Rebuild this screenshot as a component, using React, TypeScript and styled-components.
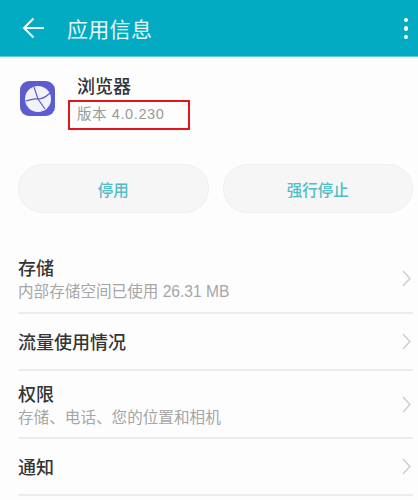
import React from "react";
import styled, { createGlobalStyle } from "styled-components";

const Global = createGlobalStyle`
  html, body { margin: 0; padding: 0; background: #fdfdfd; }
  body { font-family: "Liberation Sans", "Noto Sans CJK SC", sans-serif; }
`;
const Page = styled.div`
  width: 418px; height: 500px; overflow: hidden; background: #fdfdfd;
  display: flex; flex-direction: column;
`;
const Bar = styled.header`
  height: 57px; flex: none; background: #02abc1; border-bottom: 1px solid #5fcbd8; box-sizing: border-box;
  display: flex; align-items: center; padding: 0 10px 0 22px; color: #f2fbfc;
`;
const Title = styled.h1`
  margin: 0 0 0 23px; font-size: 21px; font-weight: 400; letter-spacing: 0.3px; flex: 1; color: #e6f7f9;
`;
const Dots = styled.div`
  display: flex; flex-direction: column; gap: 4px; margin-top: 1px;
  i { width: 4.5px; height: 4.5px; border-radius: 50%; background: #fff; display: block; }
`;
const AppRow = styled.section`
  display: flex; padding: 20px 0 0 20px; height: 107px; box-sizing: border-box; flex: none;
`;
const AppIcon = styled.div`
  width: 35px; height: 35px; border-radius: 9px; background: #5d5bd0; margin-top: 4px;
  display: flex; align-items: center; justify-content: center;
`;
const AppText = styled.div`
  margin-left: 22px; position: relative;
`;
const AppName = styled.div`
  font-size: 18px; line-height: 20px; color: #333; font-weight: 500;
`;
const Version = styled.div`
  font-size: 14.5px; line-height: 18px; color: #9a9a9a; margin-top: 8px; letter-spacing: 0.6px; white-space: nowrap;
`;
const Highlight = styled.div`
  position: absolute; left: -9px; top: 23px; width: 122px; height: 30px;
  border: 2px solid #e8141c; box-sizing: border-box;
`;
const Buttons = styled.div`
  display: flex; gap: 14px; padding: 0 5px 0 18px; flex: none;
`;
const Pill = styled.button`
  flex: 1; height: 49px; border-radius: 25px; background: #f6f6f6; border: 1px solid #efefef;
  color: #4fbcc6; font: 500 15.5px "Liberation Sans", "Noto Sans CJK SC", sans-serif; padding: 0;
`;
const List = styled.ul`
  list-style: none; margin: 31px 0 0; padding: 0 5px 0 18px;
`;
const Row = styled.li<{ $h: number }>`
  height: ${p => p.$h}px; display: flex; align-items: center; justify-content: space-between;
  border-bottom: 2px solid #ececec; box-sizing: border-box; padding-right: 2px;
`;
const RowText = styled.div`
  padding-top: 4px;
`;
const Label = styled.div`
  font-size: 18px; line-height: 23px; color: #353535; font-weight: 500;
`;
const Sub = styled.div`
  font-size: 15.6px; line-height: 21px; color: #a6a6a6; white-space: nowrap;
`;

const Chevron = () => (
  <svg width="9" height="17" viewBox="0 0 9 17" fill="none" stroke="#cfcfcf" strokeWidth="1.6">
    <path d="M1 1l7 7.5-7 7.5" />
  </svg>
);

const items: { label: string; sub?: string; h: number }[] = [
  { label: "存储", sub: "内部存储空间已使用 26.31 MB", h: 70 },
  { label: "流量使用情况", h: 57 },
  { label: "权限", sub: "存储、电话、您的位置和相机", h: 68 },
  { label: "通知", h: 57 },
];

export default function App() {
  return (
    <Page>
      <Global />
      <Bar>
        <svg width="22" height="22" viewBox="0 0 22 22" fill="none" stroke="#f2fbfc" strokeWidth="2">
          <path d="M22 11H2M11.5 1.5L2 11l9.5 9.5" />
        </svg>
        <Title>应用信息</Title>
        <Dots><i /><i /><i /></Dots>
      </Bar>
      <AppRow>
        <AppIcon>
          <svg width="28" height="28" viewBox="0 0 28 28" fill="none" stroke="#5d5bd0" strokeWidth="1.2">
            <circle cx="14" cy="14" r="13" fill="#f2f2fb" stroke="none" />
            <path d="M10 2l4 12 7 10M1.5 16c5-1 9-3 12.5-2M14 14c4 0 8-2 12-6" />
          </svg>
        </AppIcon>
        <AppText>
          <AppName>浏览器</AppName>
          <Version>版本 4.0.230</Version>
          <Highlight />
        </AppText>
      </AppRow>
      <Buttons>
        <Pill>停用</Pill>
        <Pill>强行停止</Pill>
      </Buttons>
      <List>
        {items.map(it => (
          <Row key={it.label} $h={it.h}>
            <RowText>
              <Label>{it.label}</Label>
              {it.sub && <Sub>{it.sub}</Sub>}
            </RowText>
            <Chevron />
          </Row>
        ))}
      </List>
    </Page>
  );
}
